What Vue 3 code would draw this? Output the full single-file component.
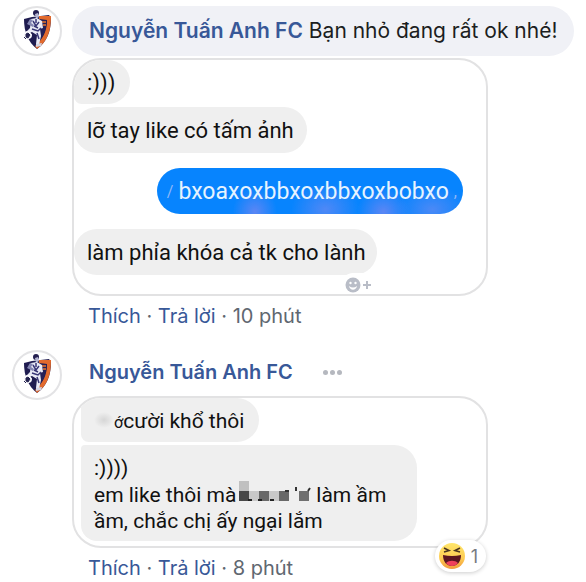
<template>
  <main class="thread">
    <article v-for="comment in comments" :key="comment.id" class="comment">
      <a href="#" class="avatar" :aria-label="author">
        <svg viewBox="0 0 46 46" aria-hidden="true">
          <path d="M10 11l8-2 17-2 2 3c0 13-4 24-14 31C14 34 10 24 10 11z" fill="#1f1c50" />
          <path d="M25 8l12 0c0 14-3 25-14 33l-2-3c8-7 12-15 12-26l-8-1z" fill="#e26a2d" />
          <path d="M27 12l6 0c-1 10-3 17-10 23z" fill="#252158" />
          <path d="M28 14h4M29 17h3" stroke="#e9772f" stroke-width="1.5" />
          <circle cx="22" cy="5" r="3" fill="#241f50" />
          <path d="M21 6l3-1 1 4-3 2z" fill="#b5b6d2" />
          <path d="M17 11l6-1 5 3 1 7-3 1 1 7-2 9-3-1 1-9-5-3-5 4-2-3 5-5z" fill="#e9eaf5" />
          <path d="M16 11l-3 5 6 3 1-2-3-2 2-3z" fill="#8587b2" />
          <path d="M19 13l3 5 3-4M18 21l6 2 3-3M23 25l2 6M22 11v4M20 18l4 2" stroke="#383575" stroke-width="1.5" fill="none" />
          <path d="M22 36l6-1-1 3-5 1z" fill="#d3d4e3" />
          <circle cx="14" cy="27" r="4" fill="#f6f6fa" />
          <path d="M12 26l2-1 2 2-2 3-2-1zM10 29l2 2M17 24l1 2" fill="#24224f" stroke="#24224f" />
        </svg>
      </a>

      <div class="body">
        <p v-if="comment.text" class="bubble">
          <a href="#" class="author">{{ author }}</a> {{ comment.text }}
        </p>
        <header v-else class="heading">
          <a href="#" class="author">{{ author }}</a>
          <button type="button" class="more" aria-label="Khác">
            <i></i><i></i><i></i>
          </button>
        </header>

        <div class="attachment">
          <div v-if="comment.id === 1" class="chat">
            <p class="message">:)))</p>
            <p class="message">lỡ tay like có tấm ảnh</p>
            <p class="message sent">
              <span class="faded">/</span>
              <span>bxoaxoxbbxoxbbxoxbobxo</span>
              <span class="faded">,</span>
            </p>
            <p class="message last">
              làm phỉa khóa cả tk cho lành
              <span class="react">
                <svg viewBox="0 0 28 16" aria-hidden="true">
                  <circle cx="8" cy="8" r="7.5" fill="#b9bdc7" />
                  <circle cx="5.5" cy="6" r="1.2" fill="#fff" />
                  <circle cx="10.5" cy="6" r="1.2" fill="#fff" />
                  <path d="M4 9q4 3 8 0c-1 5-7 5-8 0z" fill="#fff" />
                  <path d="M18 8h8M22 4v8" stroke="#b9bdc7" stroke-width="2" />
                </svg>
              </span>
            </p>
          </div>

          <div v-else class="chat reply">
            <p class="message">
              <span class="smudge"></span><small>ớ</small>cười khổ thôi
            </p>
            <p class="message long">
              :))))<br />
              em like thôi mà<svg class="mosaic" viewBox="0 0 80 20" aria-hidden="true">
                <path d="M3 0h10v10H3z" fill="#c0c0c0" />
                <path d="M3 10h10v10H3z" fill="#484848" />
                <path d="M13 10h10v10H13zM33 10h10v10H33z" fill="#c8c8c8" />
                <path d="M23 10h10v10H23zM43 10h10v10H43z" fill="#686868" />
                <path d="M63 10h10v10H63z" fill="#707070" />
                <path d="M12 19h4M22 19h4M34 19h4" stroke="#222" stroke-width="2" />
                <path d="M60 6v4M74 7l-2 3M49 10h4" stroke="#333" stroke-width="2" />
              </svg>làm ầm<br />
              ầm, chắc chị ấy ngại lắm
            </p>
          </div>

          <button v-if="comment.likes" type="button" class="reactions">
            <svg viewBox="0 0 26 26" aria-hidden="true">
              <defs>
                <linearGradient id="face" x1="0" y1="0" x2="0" y2="1">
                  <stop offset="0" stop-color="#ffe66b" />
                  <stop offset="0.6" stop-color="#fdcb52" />
                  <stop offset="1" stop-color="#f29a3e" />
                </linearGradient>
              </defs>
              <circle cx="13" cy="13" r="13" fill="url(#face)" />
              <path d="M5 5l5 2.5L5 9M21 5l-5 2.5L21 9" fill="none" stroke="#4b3520" stroke-width="1.6" />
              <path d="M4 12q9 2 18 0c0 7-4 11-9 11s-9-4-9-11z" fill="#5b1520" />
              <path d="M7 20c3-3 9-3 12 0-3 4-9 4-12 0z" fill="#f0405c" />
            </svg>
            {{ comment.likes }}
          </button>
        </div>

        <footer class="actions">
          <a href="#">Thích</a> · <a href="#">Trả lời</a> · <time>{{ comment.time }}</time>
        </footer>
      </div>
    </article>
  </main>
</template>

<script setup>
const author = "Nguyễn Tuấn Anh FC";

const comments = [
  { id: 1, text: "Bạn nhỏ đang rất ok nhé!", time: "10 phút" },
  { id: 2, time: "8 phút", likes: 1 },
];
</script>

<style>
body {
  margin: 0;
  background: #fff;
}
</style>

<style scoped>
.thread {
  padding: 6px 10px 0 12px;
  font-family: Inter, sans-serif;
  color: #1c1e21;
}
p {
  margin: 0;
}
a {
  color: #385898;
  text-decoration: none;
}
button {
  padding: 0;
  border: none;
  font-family: inherit;
  cursor: pointer;
}
.comment {
  display: flex;
  align-items: flex-start;
  gap: 10px;
}
.comment + .comment {
  margin-top: 22px;
}
.avatar {
  flex: none;
  box-sizing: border-box;
  width: 50px;
  height: 50px;
  border: 2px solid #e3e3e5;
  border-radius: 50%;
}
.avatar svg {
  display: block;
}
.body {
  flex: 1;
  min-width: 0;
}
.bubble {
  width: fit-content;
  box-sizing: border-box;
  padding: 10px 17px;
  border-radius: 25px;
  background: #f0f1f6;
  font-size: 21px;
  line-height: 30px;
  white-space: nowrap;
}
.author {
  font-weight: 600;
}
.heading {
  display: flex;
  align-items: center;
  gap: 30px;
  height: 44px;
  padding-left: 17px;
  font-size: 20px;
}
.more {
  display: flex;
  gap: 2px;
  background: none;
}
.more i {
  width: 5px;
  height: 5px;
  border-radius: 50%;
  background: #b5b8bf;
}
.attachment {
  position: relative;
  box-sizing: border-box;
  max-width: 416px;
  margin-top: 2px;
  border: 2px solid #e2e2e3;
  border-radius: 29px;
}
.chat {
  display: flex;
  flex-direction: column;
  align-items: flex-start;
  gap: 3px;
  overflow: hidden;
  border-radius: 27px;
  padding-bottom: 19px;
  font-family: Roboto, sans-serif;
  font-size: 22px;
  line-height: 26px;
  color: #111;
}
.message {
  padding: 11px 13px 9px;
  border-radius: 23px;
  background: #efefef;
}
.message:first-child {
  padding: 10px 15px 8px 13px;
  border-radius: 4px 23px 23px 8px;
}
.message.sent {
  display: flex;
  gap: 5px;
  align-self: flex-end;
  margin: 12px 23px;
  padding: 11px 6px 9px 10px;
  background:
    radial-gradient(ellipse 22px 24px at 32% 95%, #5b86f4, transparent),
    radial-gradient(ellipse 34px 26px at 55% 90%, #4f88f6, transparent),
    radial-gradient(ellipse 26px 24px at 74% 95%, #5b86f4, transparent),
    radial-gradient(ellipse 36px 24px at 90% 90%, #4b89f6, transparent),
    #0784fe;
  color: #e6f3ff;
  font-size: 23px;
}
.faded {
  color: #8fb8f8;
  font-size: 16px;
}
.message.last {
  position: relative;
  padding-right: 11px;
}
.react {
  position: absolute;
  right: 0;
  bottom: -22px;
  display: flex;
  padding: 4px;
  border-radius: 12px;
  background: #fff;
}
.react svg {
  width: 28px;
  height: 16px;
}
.reply {
  padding: 0 0 5px 7px;
  font-size: 21px;
}
.reply .message.long {
  border-radius: 4px 23px 23px 16px;
  padding: 10px 31px 7px 13px;
}
.smudge {
  display: inline-block;
  width: 20px;
  height: 16px;
  background: radial-gradient(#d6d6d6, #efefef 70%);
}
small {
  font-size: 16px;
  line-height: 1;
}
.mosaic {
  width: 80px;
  height: 20px;
  vertical-align: 1px;
}
.reactions {
  position: absolute;
  right: 0;
  bottom: -26px;
  display: flex;
  align-items: center;
  gap: 6px;
  padding: 3px 8px 3px 4px;
  border-radius: 16px;
  background: #fff;
  box-shadow: 0 1px 4px rgb(0 0 0 / 20%);
  color: #777b82;
  font-size: 18px;
}
.reactions svg {
  width: 26px;
  height: 26px;
}
.actions {
  padding: 8px 16px 0;
  font-size: 20px;
  line-height: 24px;
  color: #606770;
}
</style>
